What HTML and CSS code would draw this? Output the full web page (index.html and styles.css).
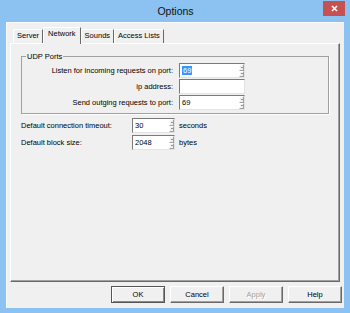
FILE: index.html
```html
<!DOCTYPE html>
<html lang="en">

<head>
    <meta charset="UTF-8">
    <title>Options</title>
    <link rel="stylesheet" href="styles.css">
</head>

<body>
    <div class="window">
        <div class="titlebar">
            <span></span>
            <span class="title">Options</span>
            <span class="close">
                <svg width="7" height="7" viewBox="0 0 7 7">
                    <path d="M1 1 L6 6 M6 1 L1 6" stroke="#fff" stroke-width="1.6" fill="none" />
                </svg>
            </span>
        </div>

        <div class="client">
            <div class="tabs">
                <div class="tab">Server</div>
                <div class="tab active">Network</div>
                <div class="tab">Sounds</div>
                <div class="tab">Access Lists</div>
            </div>

            <div class="panel">
                <fieldset class="group">
                    <legend>UDP Ports</legend>
                    <div class="port-grid">
                        <label>Listen for incoming requests on port:</label>
                        <div class="field">
                            <span class="value"><span class="sel">69</span></span>
                            <span class="spin"><span class="up"></span><span class="down"></span></span>
                        </div>

                        <label>ip address:</label>
                        <div class="field">
                            <span class="value"></span>
                        </div>

                        <label>Send outging requests to port:</label>
                        <div class="field">
                            <span class="value">69</span>
                            <span class="spin"><span class="up"></span><span class="down"></span></span>
                        </div>
                    </div>
                </fieldset>

                <div class="defaults">
                    <label>Default connection timeout:</label>
                    <div class="field">
                        <span class="value">30</span>
                        <span class="spin"><span class="up"></span><span class="down"></span></span>
                    </div>
                    <span class="unit">seconds</span>

                    <label>Default block size:</label>
                    <div class="field">
                        <span class="value">2048</span>
                        <span class="spin"><span class="up"></span><span class="down"></span></span>
                    </div>
                    <span class="unit">bytes</span>
                </div>
            </div>

            <div class="buttons">
                <button class="btn default">OK</button>
                <button class="btn">Cancel</button>
                <button class="btn disabled">Apply</button>
                <button class="btn">Help</button>
            </div>
        </div>
    </div>
</body>

</html>
```

FILE: styles.css
```css
body {
    margin: 0;
    width: 350px;
    height: 313px;
    overflow: hidden;
    background: #8bc2f1;
    font-family: "Liberation Sans", Arial, sans-serif;
    font-size: 7.5px;
    color: #000;
}

.window {
    display: flex;
    flex-direction: column;
    height: 313px;
    padding: 0 6px 5px 6px;
    box-sizing: border-box;
}

/* title bar */
.titlebar {
    height: 22px;
    display: grid;
    grid-template-columns: 1fr auto 1fr;
    align-items: start;
    margin-right: -1px;
}

.title {
    font-size: 10.5px;
    line-height: 12px;
    padding-top: 5px;
    color: #111;
}

.close {
    justify-self: end;
    width: 22px;
    height: 15px;
    margin-top: 1px;
    background: #c75050;
    display: flex;
    align-items: center;
    justify-content: center;
}

/* dialog body */
.client {
    flex: 1;
    display: flex;
    flex-direction: column;
    background: #f0f0f0;
    padding: 5px 4px 5px 4px;
    box-sizing: border-box;
    box-shadow: inset 1px 1px 0 #fafafa;
}

.tabs {
    display: flex;
    align-items: flex-end;
    height: 16px;
    padding-left: 3px;
}

.tab {
    height: 14px;
    line-height: 10px;
    padding: 1px 3px 0 3px;
    box-sizing: border-box;
    border: 1px solid;
    border-bottom: none;
    border-color: #fff #696969 transparent #fff;
    white-space: nowrap;
}

.tab.active {
    height: 17px;
    line-height: 12px;
    padding: 0 4px;
    margin-bottom: -1px;
    background: #f0f0f0;
    position: relative;
    z-index: 1;
}

.panel {
    flex: 1;
    border: 1px solid;
    border-color: #fff #696969 #696969 #fff;
    box-shadow: inset -1px -1px 0 #a0a0a0;
    padding: 8px 10px 0 10px;
}

/* group box */
.group {
    margin: 0;
    padding: 2px 0 3px 0;
    border: 1px solid #a0a0a0;
    box-shadow: 1px 1px 0 #fff;
    min-width: 0;
}

.group legend {
    margin-left: 4px;
    padding: 0 1px;
    line-height: 9px;
}

.port-grid {
    display: grid;
    grid-template-columns: 151px 66px;
    grid-auto-rows: 15px;
    column-gap: 6px;
    row-gap: 1px;
    align-items: center;
}

.port-grid label {
    text-align: right;
    white-space: nowrap;
}

.defaults {
    margin-top: 4px;
    display: grid;
    grid-template-columns: 111px 43px auto;
    grid-auto-rows: 15px;
    row-gap: 2px;
    align-items: center;
}

.unit {
    margin-left: 4px;
}

/* edit boxes */
.field {
    height: 15px;
    box-sizing: border-box;
    display: flex;
    background: #fff;
    border: 1px solid;
    border-color: #7a7a7a #e3e3e3 #e3e3e3 #7a7a7a;
}

.value {
    flex: 1;
    padding-left: 2px;
    line-height: 13px;
}

.sel {
    background: #3399ff;
    color: #fff;
    padding: 0 1px;
}

.spin {
    width: 5px;
    display: flex;
    flex-direction: column;
}

.spin span {
    flex: 1;
    display: flex;
    align-items: center;
    justify-content: center;
    background: #f0f0f0;
    border: 1px solid;
    border-color: #fff #a0a0a0 #a0a0a0 #fff;
    box-sizing: border-box;
}

.spin .up::after {
    content: "";
    border-left: 1px solid transparent;
    border-right: 1px solid transparent;
    border-bottom: 1px solid #333;
}

.spin .down::after {
    content: "";
    border-left: 1px solid transparent;
    border-right: 1px solid transparent;
    border-top: 1px solid #333;
}

/* push buttons */
.buttons {
    display: flex;
    justify-content: flex-end;
    gap: 5px;
    margin-top: 4px;
    margin-right: -2px;
}

.btn {
    width: 54px;
    height: 17px;
    padding: 0;
    font: inherit;
    color: #000;
    background: #f0f0f0;
    border: 1px solid;
    border-color: #fff #696969 #696969 #fff;
    box-shadow: inset -1px -1px 0 #a0a0a0;
}

.btn.default {
    border-color: #555;
    box-shadow: inset 1px 1px 0 #fff, inset -1px -1px 0 #8a8a8a;
}

.btn.disabled {
    color: #a0a0a0;
    text-shadow: 1px 1px 0 #fff;
}
```
